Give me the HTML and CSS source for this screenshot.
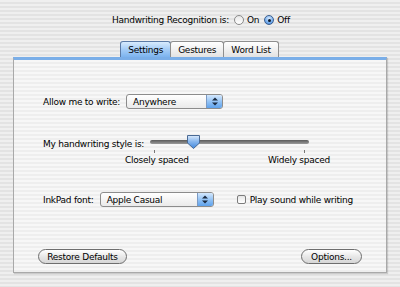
FILE: index.html
```html
<!DOCTYPE html>
<html lang="en">

<head>
    <meta charset="UTF-8">
    <title>Ink</title>
    <link rel="stylesheet" href="styles.css">
</head>

<body>
    <div class="window">
        <div class="recognition">
            <span>Handwriting Recognition is:</span>
            <label class="radio"><span class="radio-dot"></span>On</label>
            <label class="radio"><span class="radio-dot checked"></span>Off</label>
        </div>

        <div class="tabs">
            <div class="tab active">Settings</div>
            <div class="tab">Gestures</div>
            <div class="tab">Word List</div>
        </div>

        <div class="panel">
            <div class="row write-row">
                <span class="label">Allow me to write:</span>
                <div class="popup popup-write">
                    <span>Anywhere</span>
                    <span class="popup-arrows">
                        <svg width="6" height="9" viewBox="0 0 6 9">
                            <path d="M0 3.5 L3 0.5 L6 3.5 Z M0 5.5 L3 8.5 L6 5.5 Z" fill="#1a2a40" />
                        </svg>
                    </span>
                </div>
            </div>

            <div class="row style-row">
                <span class="label">My handwriting style is:</span>
                <div class="slider">
                    <div class="track"></div>
                    <svg class="thumb" width="15" height="16" viewBox="0 0 15 16">
                        <defs>
                            <linearGradient id="tg" x1="0" y1="0" x2="0" y2="1">
                                <stop offset="0" stop-color="#dbeafc" />
                                <stop offset="0.45" stop-color="#8ab8ee" />
                                <stop offset="1" stop-color="#3e86dc" />
                            </linearGradient>
                        </defs>
                        <path d="M1.5 1.5 H13.5 V9 L7.5 14.5 L1.5 9 Z" fill="url(#tg)" stroke="#4a6a94" stroke-width="1" stroke-linejoin="round" />
                    </svg>
                    <span class="tick tick-left"></span>
                    <span class="tick tick-right"></span>
                </div>
            </div>
            <div class="slider-labels">
                <span>Closely spaced</span>
                <span>Widely spaced</span>
            </div>

            <div class="row font-row">
                <span class="label">InkPad font:</span>
                <div class="popup popup-font">
                    <span>Apple Casual</span>
                    <span class="popup-arrows">
                        <svg width="6" height="9" viewBox="0 0 6 9">
                            <path d="M0 3.5 L3 0.5 L6 3.5 Z M0 5.5 L3 8.5 L6 5.5 Z" fill="#1a2a40" />
                        </svg>
                    </span>
                </div>
                <label class="check"><span class="check-box"></span>Play sound while writing</label>
            </div>

            <div class="buttons">
                <button class="pill restore">Restore Defaults</button>
                <button class="pill options">Options...</button>
            </div>
        </div>
    </div>
</body>

</html>
```

FILE: styles.css
```css
* {
    box-sizing: border-box;
    margin: 0;
    padding: 0;
}

body {
    width: 400px;
    height: 287px;
    overflow: hidden;
    font-family: "Lucida Grande", "DejaVu Sans", sans-serif;
    font-size: 9px;
    letter-spacing: -0.25px;
    color: #000;
    background: repeating-linear-gradient(to bottom, #efefef 0, #efefef 2px, #e3e3e3 2px, #e3e3e3 4px);
}

.window {
    padding-top: 13px;
}

.recognition {
    display: flex;
    justify-content: center;
    align-items: center;
    gap: 4px;
    height: 14px;
    padding-left: 2px;
}

.radio {
    display: flex;
    align-items: center;
    gap: 3px;
    margin-left: 1px;
}

.radio-dot {
    width: 10px;
    height: 10px;
    border-radius: 50%;
    border: 1px solid #8a8a8a;
    background: linear-gradient(#e8e8e8, #ffffff);
    position: relative;
}

.radio-dot.checked {
    border-color: #3d5f8e;
    background: radial-gradient(circle at 50% 30%, #d7e9fd 0, #7cb1ee 55%, #3a7fd6 100%);
}

.radio-dot.checked::after {
    content: "";
    position: absolute;
    left: 2.5px;
    top: 2.5px;
    width: 3px;
    height: 3px;
    border-radius: 50%;
    background: #0d1a2c;
}

.tabs {
    display: flex;
    justify-content: center;
    margin-top: 14px;
    height: 16px;
    position: relative;
    z-index: 1;
}

.tab {
    height: 16px;
    padding: 0 7px;
    display: flex;
    align-items: center;
    border: 1px solid #8e8e8e;
    border-bottom: none;
    border-radius: 3px 3px 0 0;
    background: linear-gradient(#ffffff, #e2e2e2);
    margin-left: -1px;
}

.tab.active {
    border-color: #5b7aa5;
    background: linear-gradient(#d8ebfd 0, #a4ccf6 50%, #7cb3ee 100%);
}

.panel {
    margin: 0 13px;
    height: 216px;
    border: 1px solid #a9a9a9;
    border-top: 3px solid #7aaee8;
    box-shadow: 1px 1px 1px rgba(0, 0, 0, 0.15);
    background: repeating-linear-gradient(to bottom, #f7f7f7 0, #f7f7f7 2px, #eeeeee 2px, #eeeeee 4px);
    padding: 34px 0 0 29px;
    position: relative;
}

.row {
    display: flex;
    align-items: center;
}

.label {
    margin-right: 6px;
}

.popup {
    height: 15px;
    border: 1px solid #8c8c8c;
    border-radius: 3px;
    background: linear-gradient(#ffffff, #eaeaea);
    display: flex;
    align-items: center;
    justify-content: space-between;
    padding-left: 6px;
    overflow: hidden;
}

.popup-write {
    width: 97px;
}

.popup-font {
    width: 114px;
}

.popup-arrows {
    width: 16px;
    height: 13px;
    display: flex;
    align-items: center;
    justify-content: center;
    border-left: 1px solid #7b9ac4;
    background: linear-gradient(#d4e8fd 0, #8fc0f4 55%, #5ea2ec 100%);
}

.style-row {
    margin-top: 27px;
}

.slider {
    width: 159px;
    height: 16px;
    position: relative;
}

.track {
    position: absolute;
    left: 0;
    right: 0;
    top: 4px;
    height: 4px;
    border-radius: 2px;
    background: linear-gradient(#5a5a5a, #9a9a9a);
}

.thumb {
    position: absolute;
    left: 36px;
    top: -2px;
}

.tick {
    position: absolute;
    top: 14px;
    width: 1px;
    height: 3px;
    background: #777;
}

.tick-left {
    left: 4px;
}

.tick-right {
    left: 154px;
}

.slider-labels {
    display: flex;
    justify-content: space-between;
    width: 205px;
    margin: 3px 0 0 82px;
}

.font-row {
    margin-top: 27px;
}

.check {
    display: flex;
    align-items: center;
    gap: 4px;
    margin-left: 23px;
}

.check-box {
    width: 9px;
    height: 9px;
    border: 1px solid #7c7c7c;
    border-radius: 2px;
    background: linear-gradient(#e6e6e6, #ffffff);
}

.buttons {
    position: absolute;
    left: 24px;
    right: 24px;
    bottom: 8px;
    display: flex;
    justify-content: space-between;
}

.pill {
    font-family: "Lucida Grande", "DejaVu Sans", sans-serif;
    font-size: 9px;
    letter-spacing: -0.25px;
    white-space: nowrap;
    color: #000;
    height: 15px;
    border: 1px solid #6e6e6e;
    border-radius: 8px;
    background: linear-gradient(#ffffff 0, #e8e8e8 50%, #d6d6d6 100%);
    padding: 0 6px;
}

.restore {
    width: 89px;
}

.options {
    width: 61px;
}
```
